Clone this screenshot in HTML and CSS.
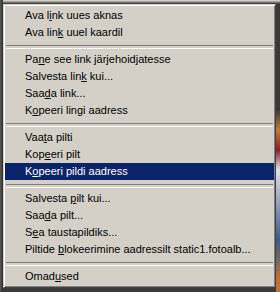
FILE: index.html
```html
<!DOCTYPE html>
<html>

<head>
    <meta charset="UTF-8">
    <title>Kontekstimenüü</title>
    <link rel="stylesheet" href="styles.css">
</head>

<body>
    <div class="menu">
        <div class="item">Ava l<u>i</u>nk uues aknas</div>
        <div class="item">Ava lin<u>k</u> uuel kaardil</div>
        <div class="sep"></div>
        <div class="item">Pa<u>n</u>e see link järjehoidjatesse</div>
        <div class="item">Salvesta lin<u>k</u> kui...</div>
        <div class="item">Saa<u>d</u>a link...</div>
        <div class="item">K<u>o</u>peeri lingi aadress</div>
        <div class="sep"></div>
        <div class="item">Vaa<u>t</u>a pilti</div>
        <div class="item">Kop<u>e</u>eri pilt</div>
        <div class="item item-active">K<u>o</u>peeri pildi aadress</div>
        <div class="sep"></div>
        <div class="item">Salvesta <u>p</u>ilt kui...</div>
        <div class="item">Saa<u>d</u>a pilt...</div>
        <div class="item">S<u>e</u>a taustapildiks...</div>
        <div class="item">Piltide <u>b</u>lokeerimine aadressilt static1.fotoalb...</div>
        <div class="sep"></div>
        <div class="item">Omad<u>u</u>sed</div>
    </div>
</body>

</html>
```

FILE: styles.css
```css
* { padding: 0px; margin: 0px; box-sizing: border-box; }

body {
    width: 280px; height: 292px; overflow: hidden;
    background-color: #3b3a38;
    background-image:
        linear-gradient(90deg, #5a5a55 0px, #2e2d2b 3px, transparent 3px),
        linear-gradient(180deg, #e8e6e0 0px, #8d8a84 2px, #2a2a2a 4px, transparent 4px),
        linear-gradient(180deg, transparent 110px, #c8782a 130px, #8a2030 150px, #e0e0e8 170px, #3a5a8a 240px, #c07030 280px);
    background-size: 100% 100%, 100% 100%, 4px 100%;
    background-position: 0 0, 0 0, 276px 0;
    background-repeat: no-repeat;
    font-family: "Liberation Sans", Arial, sans-serif;
    font-size: 11px;
}

.menu {
    width: 273px; margin: 4px 0 0 3px;
    padding: 2px 1px;
    background-color: #d4d0c8;
    border: 1px solid; border-color: #d4d0c8 #404040 #404040 #d4d0c8;
    box-shadow: inset 1px 1px #ffffff, inset -1px -1px #808080;
}

.item { height: 17px; line-height: 17px; padding-left: 20px; color: #000000; white-space: nowrap; }
.item u { text-decoration: underline; text-underline-offset: 1px; }
.item-active { background-color: #0a246a; color: #ffffff; }

.sep { height: 10px; padding-top: 4px; margin: 0 1px; }
.sep::before { content: ""; display: block; height: 2px; border-top: 1px solid #808080; border-bottom: 1px solid #ffffff; }
```
